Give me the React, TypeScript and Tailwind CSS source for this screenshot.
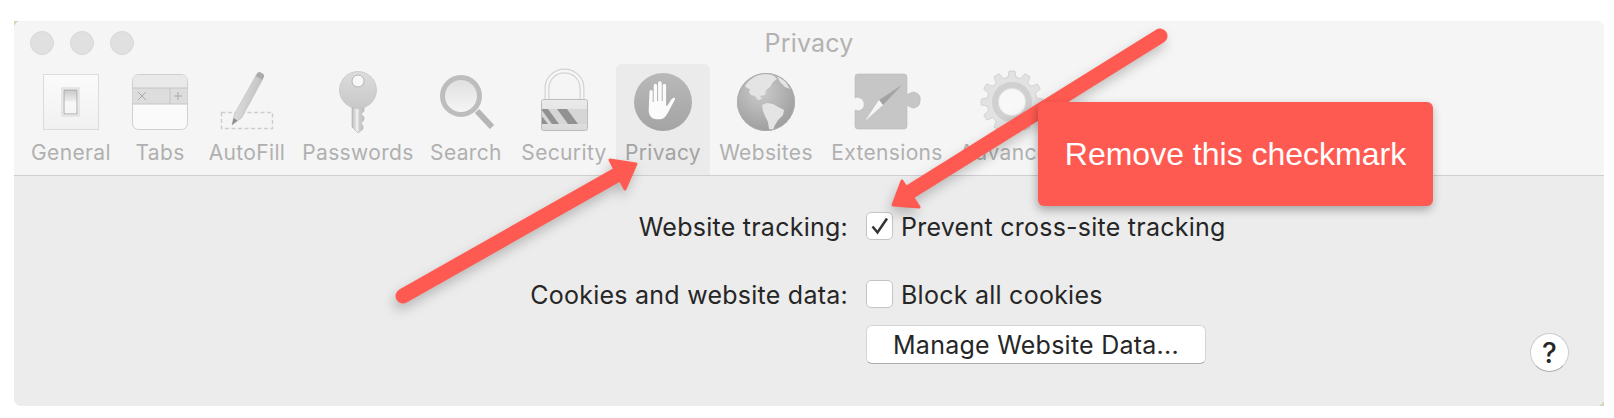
import React from "react";

const gearPath = (() => {
  const cx = 36, cy = 38, R = 31, r = 25, n = 12;
  let d = "";
  for (let i = 0; i < n; i++) {
    const a = (i / n) * Math.PI * 2 - Math.PI / 2;
    const s = Math.PI / n;
    const pts: [number, number][] = [
      [r, a - s * 0.62],
      [R, a - s * 0.36],
      [R, a + s * 0.36],
      [r, a + s * 0.62],
    ];
    pts.forEach(([rad, t], j) => {
      const x = (cx + rad * Math.cos(t)).toFixed(1);
      const y = (cy + rad * Math.sin(t)).toFixed(1);
      d += (i === 0 && j === 0 ? "M" : "L") + x + " " + y + " ";
    });
  }
  return d + "Z";
})();

const Svg = ({ children }: { children: React.ReactNode }) => (
  <svg width="70" height="72" viewBox="0 0 70 72" className="block shrink-0">
    {children}
  </svg>
);

const General = () => (
  <Svg>
    <defs>
      <linearGradient id="g1" x1="0" y1="0" x2="0" y2="1">
        <stop offset="0" stopColor="#fbfbfb" />
        <stop offset="1" stopColor="#f1f1f1" />
      </linearGradient>
      <linearGradient id="g2" x1="0" y1="0" x2="0" y2="1">
        <stop offset="0" stopColor="#c9c9c9" />
        <stop offset="0.45" stopColor="#ececec" />
        <stop offset="0.5" stopColor="#f8f8f8" />
        <stop offset="1" stopColor="#f4f4f4" />
      </linearGradient>
    </defs>
    <rect x="7.5" y="10.5" width="55" height="55" fill="url(#g1)" stroke="#dcdcdc" />
    <rect x="26" y="24" width="17" height="28" fill="#f8f8f8" stroke="#d6d6d6" />
    <rect x="28" y="26" width="13" height="24" fill="url(#g2)" stroke="#a9a9a9" />
  </Svg>
);

const Tabs = () => (
  <Svg>
    <rect x="7.5" y="10.5" width="55" height="55" rx="6" fill="#fafafa" stroke="#cfcfcf" />
    <path d="M8 24V16a5 5 0 0 1 5-5h44a5 5 0 0 1 5 5v8Z" fill="#e9e9e9" />
    <rect x="8" y="24" width="54" height="16" fill="#dddddd" />
    <path d="M8 24H62M8 40H62M45 24V40" stroke="#c4c4c4" fill="none" />
    <path d="M13 28L21 36M21 28L13 36" stroke="#a8a8a8" strokeWidth="1" />
    <path d="M53 28V36M49 32H57" stroke="#a8a8a8" strokeWidth="1" />
  </Svg>
);

const AutoFill = () => (
  <Svg>
    <defs>
      <linearGradient id="p1" x1="0" y1="0" x2="1" y2="0.4">
        <stop offset="0" stopColor="#ececec" />
        <stop offset="1" stopColor="#bcbcbc" />
      </linearGradient>
    </defs>
    <rect x="9.5" y="48.5" width="51" height="16" fill="none" stroke="#cdcdcd" strokeWidth="1.4" strokeDasharray="4 2.5" />
    <path d="M20 61L22.5 50L44 11.5L50.5 15.5L29.5 54Z" fill="url(#p1)" stroke="#bcbcbc" strokeWidth="0.6" />
    <path d="M20 61L21.5 54L25.5 56.5Z" fill="#8d8d8d" />
    <path d="M45 9.5q1.2-2.3 3.4-1.2l2.6 1.5q2 1.3 0.9 3.3L50.5 16L43.5 12Z" fill="#ababab" />
  </Svg>
);

const Key = () => (
  <Svg>
    <defs>
      <linearGradient id="k1" x1="0" y1="0" x2="0" y2="1">
        <stop offset="0" stopColor="#dcdcdc" />
        <stop offset="1" stopColor="#c8c8c8" />
      </linearGradient>
      <linearGradient id="k2" x1="0" y1="0" x2="1" y2="0">
        <stop offset="0" stopColor="#bcbcbc" />
        <stop offset="0.45" stopColor="#f2f2f2" />
        <stop offset="0.6" stopColor="#cdcdcd" />
        <stop offset="1" stopColor="#c0c0c0" />
      </linearGradient>
    </defs>
    <path d="M29 42V63L35 69L40 65V62L38 59L41 56V53L38 50L41 47V42Z" fill="url(#k2)" stroke="#b0b0b0" strokeWidth="0.6" />
    <circle cx="35" cy="26" r="18.5" fill="url(#k1)" stroke="#bbbbbb" strokeWidth="0.6" />
    <circle cx="35" cy="17" r="6" fill="#f7f7f7" stroke="#a8a8a8" strokeWidth="0.8" />
  </Svg>
);

const Search = () => (
  <Svg>
    <defs>
      <linearGradient id="s1" x1="0" y1="0" x2="0" y2="1">
        <stop offset="0" stopColor="#dedede" />
        <stop offset="1" stopColor="#f7f7f7" />
      </linearGradient>
    </defs>
    <path d="M46 47L61 63" stroke="#b5b5b5" strokeWidth="6" />
    <circle cx="30" cy="32" r="18.5" fill="url(#s1)" stroke="#bdbdbd" strokeWidth="5" />
  </Svg>
);

const Lock = () => (
  <Svg>
    <defs>
      <linearGradient id="l1" x1="0" y1="0" x2="0" y2="1">
        <stop offset="0" stopColor="#ebebeb" />
        <stop offset="1" stopColor="#dadada" />
      </linearGradient>
      <clipPath id="l2">
        <rect x="13" y="45" width="45" height="15" />
      </clipPath>
    </defs>
    <path d="M18 36V24a17.5 17 0 0 1 35 0V36" fill="none" stroke="#d2d2d2" strokeWidth="5" />
    <path d="M18 36V24a17.5 17 0 0 1 35 0V36" fill="none" stroke="#f6f6f6" strokeWidth="2.6" />
    <rect x="12.5" y="35.5" width="46" height="31" rx="2" fill="url(#l1)" stroke="#bcbcbc" />
    <rect x="13" y="45" width="45" height="15" fill="#d6d6d6" />
    <g clipPath="url(#l2)" fill="#919191">
      <path d="M12 45H19L30 60H23Z" />
      <path d="M28 45H38L49 60H39Z" />
      <path d="M12 51L19 60H12Z" />
    </g>
  </Svg>
);

const Hand = () => (
  <Svg>
    <defs>
      <linearGradient id="h1" x1="0" y1="0" x2="0" y2="1">
        <stop offset="0" stopColor="#b9b9b9" />
        <stop offset="1" stopColor="#a4a4a4" />
      </linearGradient>
    </defs>
    <circle cx="35" cy="38" r="29" fill="url(#h1)" />
    <path
      d="M19 27.5a1.6 1.6 0 0 1 3.2 0V38h1V21.5a1.7 1.7 0 0 1 3.4 0V37h1V19a1.8 1.8 0 0 1 3.6 0V37h1V21.5a1.7 1.7 0 0 1 3.4 0V41c0 1 .8 1.2 1.4.5l3.4-5.5c1-1.6 2.6-2.8 3.7-2 .9.6.4 1.6-.2 2.6l-4.5 8.5c-2 4-3.5 6.5-5.5 8.5a6 6 0 0 1-4 1.6h-3.5c-4.5 0-8.2-3-8.2-9Z"
      fill="#fbfbfb"
      transform="translate(2.5 0)"
    />
  </Svg>
);

const Globe = () => (
  <Svg>
    <defs>
      <radialGradient id="w1" cx="0.42" cy="0.32" r="0.8">
        <stop offset="0" stopColor="#cccccc" />
        <stop offset="1" stopColor="#969696" />
      </radialGradient>
      <clipPath id="w2">
        <circle cx="35" cy="38" r="29" />
      </clipPath>
    </defs>
    <circle cx="35" cy="38" r="29" fill="url(#w1)" />
    <g clipPath="url(#w2)" fill="#e4e4e4">
      <path d="M14 22c4-6 10-11 18-12 4 0 8 0 11 2l3 3-4 3-3 5-4 3-1 5-5 1 2 3-4 1-3-4-4-1-2-3 1-3-3-1Z" />
      <path d="M46 12l8 5 5 8-5-2-5-5Z" />
      <path d="M31 41l5-2 6 1 7 4 4 2-1 5-5 5-3 5-2 5-4-1-1-7-3-6-2-5Z" />
    </g>
    <circle cx="35" cy="38" r="28.5" fill="none" stroke="#adadad" />
  </Svg>
);

const Puzzle = () => (
  <Svg>
    <defs>
      <linearGradient id="e1" x1="0" y1="0" x2="1" y2="1">
        <stop offset="0" stopColor="#ffffff" />
        <stop offset="1" stopColor="#ececec" />
      </linearGradient>
    </defs>
    <path
      d="M6 10H52a3 3 0 0 1 3 3V30c2 1 3-2 7-2a7 7 0 0 1 6 9c0 5-4 7-7 7-3 0-4-3-6-2V62a3 3 0 0 1-3 3H6a3 3 0 0 1-3-3V46c2 .5 3 1 5 .5a7 7 0 0 0 4-8 7 7 0 0 0-5-5c-2-.4-3 0-4 .5V13a3 3 0 0 1 3-3Z"
      fill="#c6c6c6"
      stroke="#b8b8b8"
      strokeWidth="0.6"
    />
    <path d="M50 21L27 36L31 41Z" fill="#a3a3a3" />
    <path d="M27 36L13 57L31 41Z" fill="url(#e1)" />
  </Svg>
);

const Gear = () => (
  <Svg>
    <path d={gearPath} fill="#e2e2e2" stroke="#d2d2d2" />
    <circle cx="36" cy="38" r="17" fill="none" stroke="#d0d0d0" strokeWidth="6" />
    <circle cx="36" cy="38" r="13" fill="#f8f8f8" />
  </Svg>
);

const items: { label: string; w: string; icon: React.ReactNode; active?: boolean }[] = [
  { label: "General", w: "w-[102px]", icon: <General /> },
  { label: "Tabs", w: "w-[76px]", icon: <Tabs /> },
  { label: "AutoFill", w: "w-[98px]", icon: <AutoFill /> },
  { label: "Passwords", w: "w-[124px]", icon: <Key /> },
  { label: "Search", w: "w-[92px]", icon: <Search /> },
  { label: "Security", w: "w-[104px]", icon: <Lock /> },
  { label: "Privacy", w: "w-[94px]", icon: <Hand />, active: true },
  { label: "Websites", w: "w-[112px]", icon: <Globe /> },
  { label: "Extensions", w: "w-[130px]", icon: <Puzzle /> },
  { label: "Advanced", w: "w-[118px]", icon: <Gear /> },
];

const Light = () => (
  <div className="w-[24px] h-[24px] rounded-full bg-[#e0e0e0] border border-[#d8d8d8]" />
);

export default function App() {
  return (
    <div className="relative w-[1614px] h-[418px] bg-white overflow-hidden pt-[21px] pl-[14px] font-['Inter','Liberation_Sans',sans-serif]">
      <div className="relative w-[1590px] h-[385px]">
        <div className="absolute left-0 top-0 w-[5px] h-[5px] bg-[#d4d4b8]" />
        <div className="absolute right-0 bottom-0 w-[5px] h-[5px] bg-[#d4d4b8]" />
        <div className="relative flex flex-col w-full h-full rounded-[7px] overflow-hidden bg-[#ececec]">
          <div className="flex flex-col h-[155px] bg-[#f5f5f5] border-b border-[#cfcfcf]">
            <div className="relative flex items-center h-[43px] pl-[16px] gap-[16px] shrink-0">
              <Light />
              <Light />
              <Light />
              <div className="absolute left-0 right-0 top-[5px] text-center text-[25px] leading-[34px] tracking-[0.2px] text-[#b2b2b2]">Privacy</div>
            </div>
            <div className="flex pl-[6px] h-[111px]">
              {items.map((it) => (
                <div
                  key={it.label}
                  className={`${it.w} flex flex-col items-center rounded-t-[6px] ${it.active ? "bg-[#ebebeb]" : ""}`}
                >
                  {it.icon}
                  <div className={`mt-[3px] text-[21px] leading-[28px] tracking-[0.35px] whitespace-nowrap ${it.active ? "text-[#a3a3a3]" : "text-[#b0b0b0]"}`}>
                    {it.label}
                  </div>
                </div>
              ))}
            </div>
          </div>
          <div className="relative flex-1 flex flex-col pt-[36px] text-[25px] leading-[28px] tracking-[0.25px] text-[#262626]">
            <div className="flex items-center h-[28px]">
              <div className="w-[834px] text-right pt-[1px]">Website tracking:</div>
              <div className="ml-[18px] w-[27px] h-[28px] rounded-[5px] bg-white border border-[#c4c4c4] flex items-center justify-center">
                <svg width="20" height="20" viewBox="0 0 20 20">
                  <path d="M2.5 10.5L7.5 16.5L17 2.5" fill="none" stroke="#333333" strokeWidth="2.5" />
                </svg>
              </div>
              <div className="ml-[8px] pt-[1px]">Prevent cross-site tracking</div>
            </div>
            <div className="flex items-center h-[28px] mt-[40px]">
              <div className="w-[834px] text-right pt-[1px]">Cookies and website data:</div>
              <div className="ml-[18px] w-[27px] h-[28px] rounded-[5px] bg-white border border-[#c4c4c4]" />
              <div className="ml-[8px] pt-[1px]">Block all cookies</div>
            </div>
            <div className="ml-[852px] mt-[17px] w-[340px] h-[39px] rounded-[6px] bg-white border border-[#d4d4d4] border-b-[#aeaeae] flex items-center justify-center">
              Manage Website Data...
            </div>
            <div className="absolute right-[35px] bottom-[34px] w-[39px] h-[39px] rounded-full bg-white border border-[#cdcdcd] border-b-[#aeaeae] flex items-center justify-center text-[28px] font-medium">
              ?
            </div>
          </div>
        </div>
      </div>

      <svg width="1614" height="418" viewBox="0 0 1614 418" className="absolute left-0 top-0 drop-shadow-[-2px_6px_6px_rgba(0,0,0,0.22)]">
        <g fill="#ff5a51" stroke="#ff5a51" strokeLinejoin="round" strokeLinecap="round">
          <path d="M403 296L622 172" strokeWidth="15" fill="none" />
          <path d="M610 160L636 164L625 189Z" strokeWidth="3" />
          <path d="M1160 36L905 195" strokeWidth="15" fill="none" />
          <path d="M893 205L902 181L919 207Z" strokeWidth="3" />
        </g>
      </svg>

      <div className="absolute left-[1038px] top-[102px] w-[395px] h-[104px] rounded-[6px] bg-[#ff5a51] shadow-[-1px_4px_10px_rgba(0,0,0,0.3)] flex items-center justify-center text-white text-[32px] font-['Liberation_Sans',Arial,sans-serif]">
        Remove this checkmark
      </div>
    </div>
  );
}
